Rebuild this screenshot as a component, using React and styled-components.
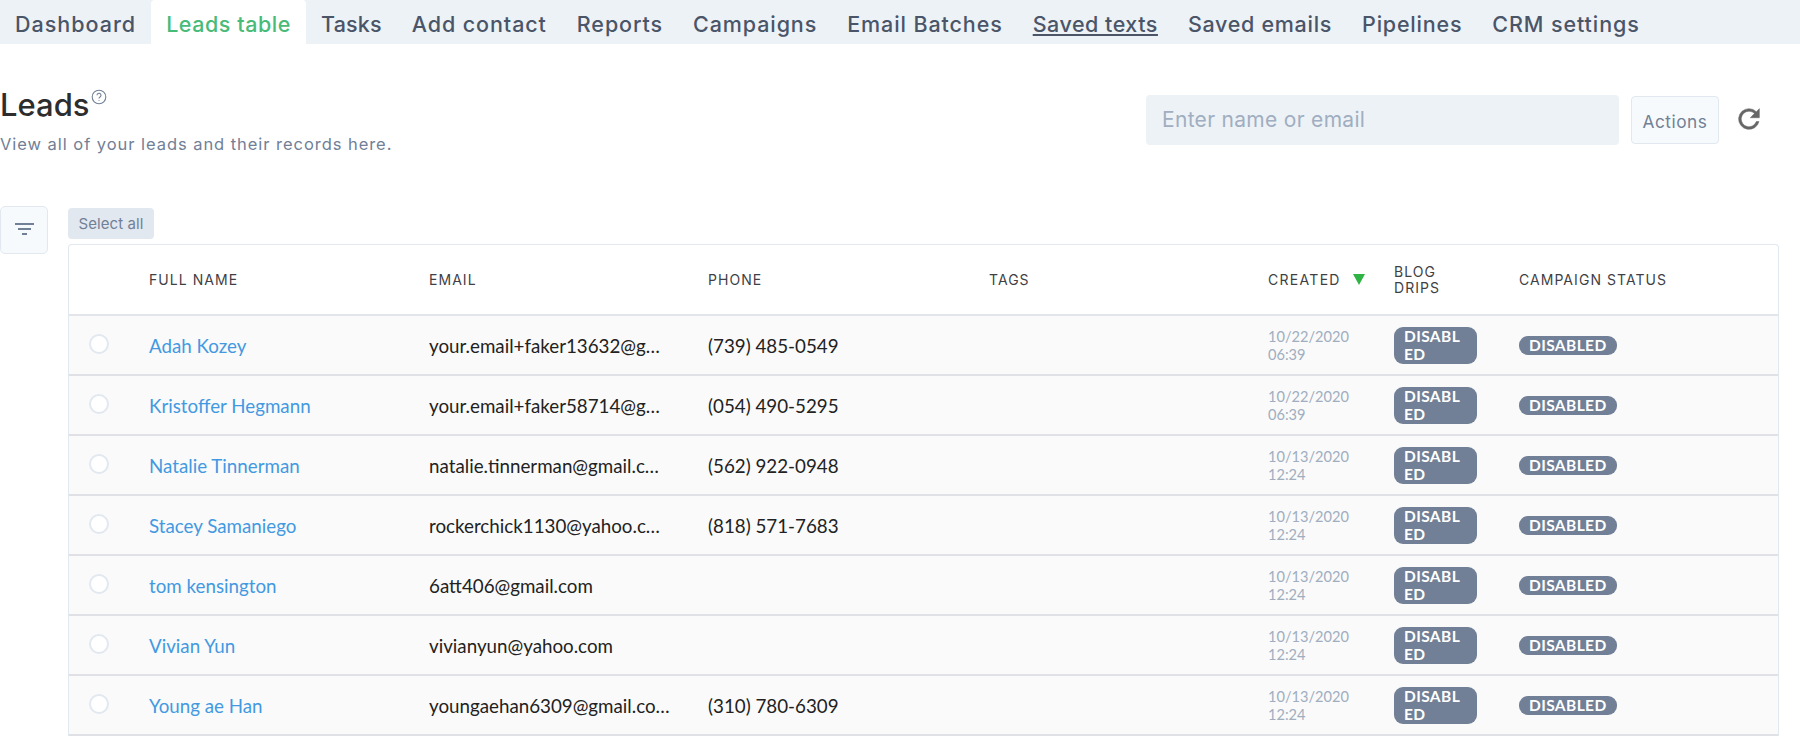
import React from "react";
import styled, { createGlobalStyle } from "styled-components";

const Global = createGlobalStyle`
  html, body { margin: 0; padding: 0; background: #fff; overflow: hidden; height: 736px; }
  * { box-sizing: border-box; }
`;
const heading = `"Inter", "Noto Sans", sans-serif`;
const body = `"Lato", "Liberation Sans", sans-serif`;

const Page = styled.div`width: 1800px; height: 736px; overflow: hidden; font-family: ${heading};`;
const Nav = styled.nav`display: flex; height: 44px; background: #edf2f7;`;
const Tab = styled.a`
  padding: 0 15px; line-height: 49px; height: 44px; font-size: 21.5px; font-weight: 500;
  letter-spacing: ${p => p.$track}px; white-space: nowrap;
  color: ${p => (p.$active ? "#48bb78" : "#4a5568")};
  background: ${p => (p.$active ? "#fff" : "transparent")};
  text-decoration: ${p => (p.$hover ? "underline" : "none")};
  border-radius: ${p => (p.$active ? "4px 4px 0 0" : "0")};
`;
const Head = styled.header`display: flex; justify-content: space-between; height: 162px; padding-top: 41px;`;
const TitleBlock = styled.div`display: flex; flex-direction: column;`;
const TitleRow = styled.div`display: flex; align-items: flex-start;`;
const Title = styled.h1`margin: 0; font-size: 31px; line-height: 40px; font-weight: 500; color: #2d2d2d;`;
const Sub = styled.p`margin: 9px 0 0; font-size: 16.5px; line-height: 20px; color: #718096; letter-spacing: .95px;`;
const Tools = styled.div`display: flex; align-items: flex-start; margin-top: 10px; padding-right: 40px;`;
const Search = styled.input`
  width: 473px; height: 50px; border: 0; border-radius: 4px; background: #edf2f7; padding: 0 16px 2px;
  font-family: ${heading}; font-size: 21px; letter-spacing: .3px; color: #4a5568;
  &::placeholder { color: #a0aec0; opacity: 1; }
`;
const Actions = styled.button`
  margin: 1px 0 0 12px; width: 88px; height: 48px; border: 1px solid #e2e8f0; border-radius: 4px; background: #f7fafc;
  font-family: ${heading}; font-size: 17.3px; letter-spacing: .5px; color: #718096; padding: 3px 0 0;
`;
const Refresh = styled.span`display: flex; margin: 13px 0 0 19px; color: #666;`;
const Main = styled.div`display: flex; align-items: flex-start;`;
const FilterBtn = styled.button`
  flex: none; width: 48px; height: 48px; border: 1px solid #e2e8f0; border-radius: 5px; background: #f7fafc;
  display: flex; align-items: center; justify-content: center; padding: 0; color: #718096;
`;
const Content = styled.div`margin: 2px 0 0 20px; width: 1711px;`;
const SelectAll = styled.button`
  display: block; width: 86px; height: 31px; border: 0; border-radius: 4px; background: #e2e8f0;
  font-family: ${heading}; font-size: 15px; letter-spacing: .1px; color: #718096; padding: 0;
`;
const Card = styled.div`margin-top: 5px; border: 1px solid #e2e8f0; border-bottom: 0; border-radius: 4px 4px 0 0;`;
const cols = "80px 280px 279px 281px 280px 125px 125px 1fr";
const HeadRow = styled.div`
  display: grid; grid-template-columns: ${cols}; align-items: center; height: 71px; border-bottom: 2px solid #e2e5ea;
  font-size: 14px; line-height: 16px; letter-spacing: 1.05px; color: #3f3f46; text-transform: uppercase;
`;
const Created = styled.span`display: flex; align-items: center; gap: 12px; margin-left: -1px; letter-spacing: 1.3px;`;
const Row = styled.div`
  display: grid; grid-template-columns: ${cols}; align-items: center; height: 60px; background: #fafafa;
  border-bottom: 2px solid #dfe1e6; font-family: ${body}; font-size: 18.75px; color: #222;
`;
const Radio = styled.span`
  margin: -3px 0 0 20px; width: 20px; height: 20px; border-radius: 50%; background: #fff; border: 2px solid #e2e8f0;
`;
const Name = styled.a`color: #4299e1;`;
const Email = styled.span`white-space: nowrap;`;
const Stamp = styled.span`font-size: 14.6px; line-height: 18px; color: #a0aec0; margin: 1px 0 0 -1px;`;
const Pill = styled.span`
  display: inline-block; background: #718096; color: #fff; font-weight: 700; font-size: 15.5px; line-height: 18px;
  letter-spacing: .4px; padding: 0 10px; border-radius: 9px;
  width: ${p => p.$w}px; word-break: break-all; height: ${p => p.$h}px;
`;
const PillCell = styled.span`display: flex;`;

const tabs = [
  ["Dashboard", 1], ["Leads table", .55], ["Tasks", .2], ["Add contact", .9], ["Reports", .9], ["Campaigns", .9],
  ["Email Batches", .9], ["Saved texts", .5], ["Saved emails", .7], ["Pipelines", .8], ["CRM settings", .9],
];
const rows = [
  ["Adah Kozey", "your.email+faker13632@g…", "(739) 485-0549", "10/22/2020", "06:39"],
  ["Kristoffer Hegmann", "your.email+faker58714@g…", "(054) 490-5295", "10/22/2020", "06:39"],
  ["Natalie Tinnerman", "natalie.tinnerman@gmail.c…", "(562) 922-0948", "10/13/2020", "12:24"],
  ["Stacey Samaniego", "rockerchick1130@yahoo.c…", "(818) 571-7683", "10/13/2020", "12:24"],
  ["tom kensington", "6att406@gmail.com", "", "10/13/2020", "12:24"],
  ["Vivian Yun", "vivianyun@yahoo.com", "", "10/13/2020", "12:24"],
  ["Young ae Han", "youngaehan6309@gmail.co…", "(310) 780-6309", "10/13/2020", "12:24"],
];

export default function App() {
  return (
    <Page>
      <Global />
      <Nav>
        {tabs.map(([t, track]) => <Tab key={t} $track={track} $active={t === "Leads table"} $hover={t === "Saved texts"}>{t}</Tab>)}
      </Nav>
      <Head>
        <TitleBlock>
          <TitleRow>
            <Title>Leads</Title>
            <svg width="16" height="16" viewBox="0 0 16 16" fill="none" stroke="#718096" strokeWidth="1.1" style={{ marginTop: 4, marginLeft: 1 }}>
              <circle cx="8" cy="8" r="6.8" />
              <path d="M6 6.2a2 2 0 1 1 3 1.8c-.7.4-1 .8-1 1.6" />
              <path d="M8 11.2v.8" />
            </svg>
          </TitleRow>
          <Sub>View all of your leads and their records here.</Sub>
        </TitleBlock>
        <Tools>
          <Search placeholder="Enter name or email" />
          <Actions>Actions</Actions>
          <Refresh>
            <svg width="22" height="22" viewBox="3.5 3.5 17 17" fill="currentColor">
              <path d="M17.65 6.35A7.96 7.96 0 0 0 12 4a8 8 0 1 0 7.73 10h-2.08A6 6 0 1 1 12 6c1.66 0 3.14.69 4.22 1.78L13 11h7V4l-2.35 2.35z" stroke="currentColor" strokeWidth=".4" />
            </svg>
          </Refresh>
        </Tools>
      </Head>
      <Main>
        <FilterBtn>
          <svg width="19" height="12" viewBox="0 0 19 12" fill="currentColor" style={{ marginTop: -2 }}><path d="M0 0h19v2H0zM3 5h13v2H3zM7 10h5v2H7z" /></svg>
        </FilterBtn>
        <Content>
          <SelectAll>Select all</SelectAll>
          <Card>
            <HeadRow>
              <span />
              <span>Full name</span>
              <span>Email</span>
              <span>Phone</span>
              <span>Tags</span>
              <Created>Created
                <svg width="12" height="11" viewBox="0 0 12 11"><path d="M0 0h12L6 11z" fill="#2fb344" /></svg>
              </Created>
              <span>Blog<br />drips</span>
              <span>Campaign status</span>
            </HeadRow>
            {rows.map(r => (
              <Row key={r[0]}>
                <Radio />
                <Name>{r[0]}</Name>
                <Email>{r[1]}</Email>
                <span>{r[2]}</span>
                <span />
                <Stamp>{r[3]}<br />{r[4]}</Stamp>
                <PillCell><Pill $w={83} $h={37}>DISABLED</Pill></PillCell>
                <PillCell><Pill $w={98} $h={19}>DISABLED</Pill></PillCell>
              </Row>
            ))}
          </Card>
        </Content>
      </Main>
    </Page>
  );
}
